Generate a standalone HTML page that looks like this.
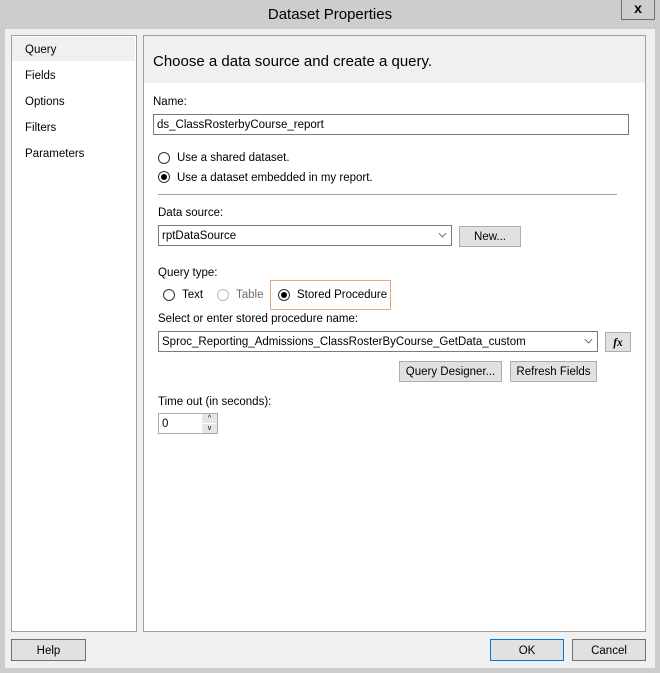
<!DOCTYPE html>
<html><head><style>
*{margin:0;padding:0;box-sizing:border-box}
body{width:660px;height:673px;background:#cdcdcd;font-family:"Liberation Sans",sans-serif;font-size:11.5px;color:#000;position:relative;overflow:hidden}
.a{position:absolute}
.t{margin-top:2px}
.title{left:0;width:660px;top:6px;text-align:center;font-size:15px;color:#000}
.close{left:621px;top:-1px;width:34px;height:21px;border:1px solid #707070;border-top:none;text-align:center;font-weight:bold;font-size:14px;line-height:18px}
.client{left:5px;top:29px;width:650px;height:639px;background:#f0f0f0}
.panel{background:#fff;border:1px solid #a0a0a0}
.btn{background:#e1e1e1;border:1px solid #adadad;text-align:center;line-height:20px}
.inp{background:#fff;border:1px solid #7a7a7a;padding-left:3px;line-height:20px}
.rad{width:12px;height:12px;border:1px solid #333;border-radius:50%;background:#fff}
.rad.on::after{content:"";position:absolute;left:2px;top:2px;width:6px;height:6px;border-radius:50%;background:#000}
.dd{position:absolute;right:5px;top:4px;width:7px;height:7px;border-right:1.5px solid #555;border-bottom:1.5px solid #555;transform:rotate(45deg) scale(.8)}
</style></head><body>
<div class="a title">Dataset Properties</div>
<div class="a close">x</div>
<div class="a client"></div>
<div class="a panel" style="left:11px;top:35px;width:126px;height:597px"></div>
<div class="a" style="left:12px;top:37px;width:123px;height:24px;background:#f0f0f0"></div>
<div class="a" style="left:25px;top:44px">Query</div>
<div class="a" style="left:25px;top:70px">Fields</div>
<div class="a" style="left:25px;top:96px">Options</div>
<div class="a" style="left:25px;top:122px">Filters</div>
<div class="a" style="left:25px;top:148px">Parameters</div>
<div class="a panel" style="left:143px;top:35px;width:503px;height:597px"></div>
<div class="a" style="left:144px;top:36px;width:501px;height:47px;background:#f0f0f0"></div>
<div class="a" style="left:153px;top:53px;font-size:15px">Choose a data source and create a query.</div>
<div class="a" style="left:153px;top:96px">Name:</div>
<div class="a inp" style="left:153px;top:114px;width:476px;height:21px">ds_ClassRosterbyCourse_report</div>
<div class="a rad" style="left:158px;top:152px"></div>
<div class="a" style="left:177px;top:152px">Use a shared dataset.</div>
<div class="a rad on" style="left:158px;top:171px"></div>
<div class="a" style="left:177px;top:172px">Use a dataset embedded in my report.</div>
<div class="a" style="left:158px;top:194px;width:459px;height:1px;background:#a0a0a0"></div>
<div class="a" style="left:158px;top:207px">Data source:</div>
<div class="a inp" style="left:158px;top:225px;width:294px;height:21px">rptDataSource<span class="dd"></span></div>
<div class="a btn" style="left:459px;top:226px;width:62px;height:21px">New...</div>
<div class="a" style="left:158px;top:267px">Query type:</div>
<div class="a rad" style="left:163px;top:289px"></div>
<div class="a" style="left:182px;top:289px">Text</div>
<div class="a rad" style="left:217px;top:289px;border-color:#bbb"></div>
<div class="a" style="left:236px;top:289px;color:#6d6d6d">Table</div>
<div class="a" style="left:270px;top:280px;width:121px;height:30px;border:1px solid #e8a87c"></div>
<div class="a rad on" style="left:278px;top:289px"></div>
<div class="a" style="left:297px;top:289px">Stored Procedure</div>
<div class="a" style="left:158px;top:313px">Select or enter stored procedure name:</div>
<div class="a inp" style="left:158px;top:331px;width:440px;height:21px">Sproc_Reporting_Admissions_ClassRosterByCourse_GetData_custom<span class="dd"></span></div>
<div class="a btn" style="left:605px;top:332px;width:26px;height:20px;font-family:'Liberation Serif',serif;font-style:italic;font-weight:bold">fx</div>
<div class="a btn" style="left:399px;top:361px;width:103px;height:21px;line-height:21px">Query Designer...</div>
<div class="a btn" style="left:510px;top:361px;width:87px;height:21px;line-height:21px">Refresh Fields</div>
<div class="a" style="left:158px;top:396px">Time out (in seconds):</div>
<div class="a inp" style="left:158px;top:413px;width:60px;height:21px;border-color:#aaa">0</div>
<div class="a" style="left:202px;top:414px;width:15px;height:9px;background:#e5e5e5;font-size:7px;text-align:center;line-height:9px">^</div>
<div class="a" style="left:202px;top:424px;width:15px;height:9px;background:#e5e5e5;font-size:7px;text-align:center;line-height:9px">v</div>
<div class="a btn" style="left:11px;top:639px;width:75px;height:22px;line-height:22px;border-color:#707070">Help</div>
<div class="a btn" style="left:490px;top:639px;width:74px;height:22px;line-height:22px;border-color:#0078d7">OK</div>
<div class="a btn" style="left:572px;top:639px;width:74px;height:22px;line-height:22px;border-color:#707070">Cancel</div>
</body></html>
